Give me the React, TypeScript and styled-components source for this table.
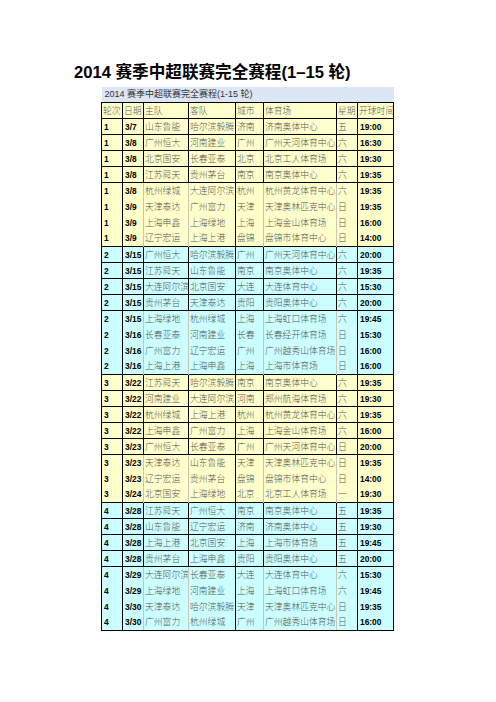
import React from 'react'
import styled, { createGlobalStyle, css } from 'styled-components'

const GlobalStyle = createGlobalStyle`
  html, body {
    margin: 0;
    padding: 0;
    background: #ffffff;
  }
  body {
    font-family: "Liberation Sans", "Noto Sans CJK SC", sans-serif;
  }
`

type Match = [string, string, string, string, string, string, string, string]

interface Round {
  tone: 'yellow' | 'cyan'
  boxed: number
  matches: Match[]
}

const rounds: Round[] = [
  {
    tone: 'yellow',
    boxed: 4,
    matches: [
      ['1', '3/7', '山东鲁能', '哈尔滨毅腾', '济南', '济南奥体中心', '五', '19:00'],
      ['1', '3/8', '广州恒大', '河南建业', '广州', '广州天河体育中心', '六', '16:30'],
      ['1', '3/8', '北京国安', '长春亚泰', '北京', '北京工人体育场', '六', '19:30'],
      ['1', '3/8', '江苏舜天', '贵州茅台', '南京', '南京奥体中心', '六', '19:35'],
      ['1', '3/8', '杭州绿城', '大连阿尔滨', '杭州', '杭州黄龙体育中心', '六', '19:35'],
      ['1', '3/9', '天津泰达', '广州富力', '天津', '天津奥林匹克中心', '日', '19:35'],
      ['1', '3/9', '上海申鑫', '上海绿地', '上海', '上海金山体育场', '日', '16:00'],
      ['1', '3/9', '辽宁宏运', '上海上港', '盘锦', '盘锦市体育中心', '日', '14:00'],
    ],
  },
  {
    tone: 'cyan',
    boxed: 4,
    matches: [
      ['2', '3/15', '广州恒大', '哈尔滨毅腾', '广州', '广州天河体育中心', '六', '20:00'],
      ['2', '3/15', '江苏舜天', '山东鲁能', '南京', '南京奥体中心', '六', '19:35'],
      ['2', '3/15', '大连阿尔滨', '北京国安', '大连', '大连体育中心', '六', '15:30'],
      ['2', '3/15', '贵州茅台', '天津泰达', '贵阳', '贵阳奥体中心', '六', '20:00'],
      ['2', '3/15', '上海绿地', '杭州绿城', '上海', '上海虹口体育场', '六', '19:45'],
      ['2', '3/16', '长春亚泰', '河南建业', '长春', '长春经开体育场', '日', '15:30'],
      ['2', '3/16', '广州富力', '辽宁宏运', '广州', '广州越秀山体育场', '日', '16:00'],
      ['2', '3/16', '上海上港', '上海申鑫', '上海', '上海市体育场', '日', '16:00'],
    ],
  },
  {
    tone: 'yellow',
    boxed: 5,
    matches: [
      ['3', '3/22', '江苏舜天', '哈尔滨毅腾', '南京', '南京奥体中心', '六', '19:35'],
      ['3', '3/22', '河南建业', '大连阿尔滨', '河南', '郑州航海体育场', '六', '19:30'],
      ['3', '3/22', '杭州绿城', '上海上港', '杭州', '杭州黄龙体育中心', '六', '19:35'],
      ['3', '3/22', '上海申鑫', '广州富力', '上海', '上海金山体育场', '六', '16:00'],
      ['3', '3/23', '广州恒大', '长春亚泰', '广州', '广州天河体育中心', '日', '20:00'],
      ['3', '3/23', '天津泰达', '山东鲁能', '天津', '天津奥林匹克中心', '日', '19:35'],
      ['3', '3/23', '辽宁宏运', '贵州茅台', '盘锦', '盘锦市体育中心', '日', '14:00'],
      ['3', '3/24', '北京国安', '上海绿地', '北京', '北京工人体育场', '一', '19:30'],
    ],
  },
  {
    tone: 'cyan',
    boxed: 4,
    matches: [
      ['4', '3/28', '江苏舜天', '广州恒大', '南京', '南京奥体中心', '五', '19:35'],
      ['4', '3/28', '山东鲁能', '辽宁宏运', '济南', '济南奥体中心', '五', '19:30'],
      ['4', '3/28', '上海上港', '北京国安', '上海', '上海市体育场', '五', '19:45'],
      ['4', '3/28', '贵州茅台', '上海申鑫', '贵阳', '贵阳奥体中心', '五', '20:00'],
      ['4', '3/29', '大连阿尔滨', '长春亚泰', '大连', '大连体育中心', '六', '15:30'],
      ['4', '3/29', '上海绿地', '河南建业', '上海', '上海虹口体育场', '六', '19:45'],
      ['4', '3/30', '天津泰达', '哈尔滨毅腾', '天津', '天津奥林匹克中心', '日', '19:35'],
      ['4', '3/30', '广州富力', '杭州绿城', '广州', '广州越秀山体育场', '日', '16:00'],
    ],
  },
]

const headers = ['轮次', '日期', '主队', '客队', '城市', '体育场', '星期', '开球时间']
const widths = [21, 21, 45, 47, 28, 73, 21, 36]
// columns drawn black in rows without a full box
const strongCols = [0, 1, 4, 7]
const numericCols = [0, 1, 7]

const fills = {
  yellow: '#ffffcc',
  cyan: '#ccffff',
}

const Page = styled.div`
  padding: 62px 0 40px 74px;
`

const Title = styled.h1`
  margin: 0;
  font-family: "Liberation Sans", "Noto Sans CJK SC", sans-serif;
  font-size: 16.6px;
  font-weight: 700;
  line-height: 22px;
  color: #000;
`

const Sheet = styled.table`
  margin: 3px 0 0 27px;
  border-collapse: collapse;
  table-layout: fixed;
  width: 292px;
`

const Band = styled.td`
  height: 15px;
  padding: 0 0 0 3px;
  background: #dce6f4;
  font-family: "Liberation Sans", "Noto Sans CJK SC", sans-serif;
  font-size: 9px;
  line-height: 15px;
  color: #333;
  white-space: nowrap;
`

const Row = styled.tr`
  height: 16px;
`

const Cell = styled.td<{ $fill: string; $boxed: boolean; $col: number; $last: boolean }>`
  height: 15px;
  padding: 0 0 0 1px;
  background: ${(p) => p.$fill};
  white-space: nowrap;
  overflow: hidden;
  vertical-align: middle;
  line-height: 14px;
  font-family: "Noto Sans CJK SC", sans-serif;
  font-weight: 300;
  font-size: 8.8px;
  color: #555;
  ${(p) =>
    p.$boxed
      ? css`
          border: 1px solid #000;
        `
      : css`
          border-top: none;
          border-bottom: ${p.$last ? '1px solid #000' : 'none'};
          border-right: ${p.$col === 7 ? '1px solid #000' : 'none'};
          border-left: 1px solid ${strongCols.includes(p.$col) ? '#000' : '#c9c6b4'};
        `}
`

const Num = styled.span`
  display: inline-block;
  vertical-align: top;
  line-height: 14px;
  padding-left: 1px;
  font-family: "Liberation Sans", sans-serif;
  font-weight: 700;
  font-size: 8.4px;
  color: #000;
`

const renderValue = (value: string, col: number) =>
  numericCols.includes(col) ? <Num>{value}</Num> : value

const App: React.FC = () => {
  const total = rounds.reduce((n, r) => n + r.matches.length, 0)
  let index = 0

  return (
    <>
      <GlobalStyle />
      <Page>
        <Title>2014 赛季中超联赛完全赛程(1–15 轮)</Title>
        <Sheet>
          <colgroup>
            {widths.map((w, i) => (
              <col key={i} style={{ width: w }} />
            ))}
          </colgroup>
          <tbody>
            <tr>
              <Band colSpan={8}>2014 赛季中超联赛完全赛程(1-15 轮)</Band>
            </tr>
            <Row>
              {headers.map((h, c) => (
                <Cell key={h} $fill={fills.yellow} $boxed $col={c} $last={false}>
                  {h}
                </Cell>
              ))}
            </Row>
            {rounds.map((round) =>
              round.matches.map((m, r) => {
                index += 1
                const boxed = r < round.boxed
                const last = index === total
                return (
                  <Row key={`${m[0]}-${r}`}>
                    {m.map((v, c) => (
                      <Cell key={c} $fill={fills[round.tone]} $boxed={boxed} $col={c} $last={last}>
                        {renderValue(v, c)}
                      </Cell>
                    ))}
                  </Row>
                )
              })
            )}
          </tbody>
        </Sheet>
      </Page>
    </>
  )
}

export default App
